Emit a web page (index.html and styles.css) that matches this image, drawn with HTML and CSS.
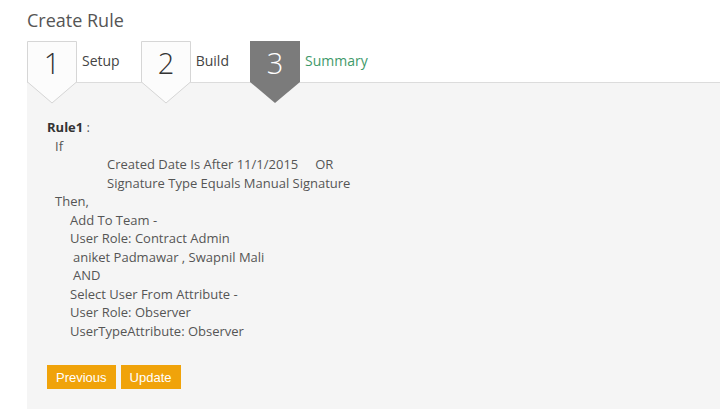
FILE: index.html
```html
<html>
    <head>
    <meta charset="UTF-8">
    <link rel="stylesheet" href="styles.css">
    <title>Create Rule</title>
    </head>
    <body>
    <h1 class="page-title">Create Rule</h1>

    <!-- wizard steps -->
    <div class="steps">
        <div class="step">
            <svg class="badge" width="50" height="63" viewBox="0 0 50 63">
                <polygon class="badge-shape" points="0.5,0.5 49.5,0.5 49.5,41 25,62 0.5,41"/>
                <text class="badge-num" x="25" y="33">1</text>
            </svg>
            <span class="step-label">Setup</span>
        </div>
        <div class="step">
            <svg class="badge" width="50" height="63" viewBox="0 0 50 63">
                <polygon class="badge-shape" points="0.5,0.5 49.5,0.5 49.5,41 25,62 0.5,41"/>
                <text class="badge-num" x="25" y="33">2</text>
            </svg>
            <span class="step-label">Build</span>
        </div>
        <div class="step active">
            <svg class="badge" width="50" height="63" viewBox="0 0 50 63">
                <polygon class="badge-shape" points="0,0 50,0 50,41 25,62 0,41"/>
                <text class="badge-num" x="25" y="33">3</text>
            </svg>
            <span class="step-label">Summary</span>
        </div>
    </div>

    <!-- summary of the rule -->
    <div class="panel">
        <div class="summary">
            <div class="line"><b>Rule1</b> :</div>
            <div class="line ind-1">If</div>
            <div class="line ind-3">Created Date Is After 11/1/2015&nbsp;&nbsp;&nbsp;&nbsp; OR</div>
            <div class="line ind-3">Signature Type Equals Manual Signature</div>
            <div class="line ind-1">Then,</div>
            <div class="line ind-2">Add To Team -</div>
            <div class="line ind-2">User Role: Contract Admin</div>
            <div class="line ind-2b">aniket Padmawar , Swapnil Mali</div>
            <div class="line ind-2b">AND</div>
            <div class="line ind-2">Select User From Attribute -</div>
            <div class="line ind-2">User Role: Observer</div>
            <div class="line ind-2">UserTypeAttribute: Observer</div>
        </div>
        <div class="actions">
            <button class="btn">Previous</button>
            <button class="btn">Update</button>
        </div>
    </div>
    </body>
</html>
```

FILE: styles.css
```css
*{
    box-sizing: border-box;
}
body{
    margin: 0;
    padding: 0 0 10px 27px;
    font-family: "Open Sans", "DejaVu Sans", sans-serif;
    color: #555;
    background: #fff;
}
.page-title{
    margin: 0;
    padding-top: 7px;
    height: 41px;
    font-size: 18px;
    font-weight: 400;
    color: #555;
    line-height: 26px;
}
.steps{
    display: flex;
    align-items: flex-start;
    height: 41px;
    position: relative;
    z-index: 1;
}
.step{
    display: flex;
    align-items: flex-start;
    margin-right: 21px;
}
.badge{
    display: block;
    overflow: visible;
}
.badge-shape{
    fill: #fcfcfc;
    stroke: #d6d6d6;
    stroke-width: 1;
}
.badge-num{
    font-family: "Open Sans", sans-serif;
    font-size: 29px;
    font-weight: 300;
    fill: #333;
    text-anchor: middle;
}
.step.active .badge-shape{
    fill: #7b7b7b;
    stroke: none;
}
.step.active .badge-num{
    fill: #fff;
}
.step-label{
    margin-left: 5px;
    padding-top: 10px;
    font-size: 14px;
    line-height: 20px;
    color: #444;
}
.step.active .step-label{
    color: #3f9a6a;
}
.panel{
    background: #f5f5f5;
    border-top: 1px solid #dcdcdc;
    padding: 35px 20px 20px 20px;
    height: 327px;
}
.summary{
    font-size: 13px;
    line-height: 18.5px;
    color: #555;
}
.summary b{
    color: #333;
}
.ind-1{ padding-left: 8px; }
.ind-2{ padding-left: 23px; }
.ind-2b{ padding-left: 26px; }
.ind-3{ padding-left: 60px; }
.actions{
    display: flex;
    gap: 5px;
    margin-top: 25px;
}
.btn{
    height: 24px;
    padding: 0 9px;
    border: none;
    background: #f0a30a;
    color: #fff;
    font-family: "Liberation Sans", Arial, sans-serif;
    font-size: 13px;
}
```
